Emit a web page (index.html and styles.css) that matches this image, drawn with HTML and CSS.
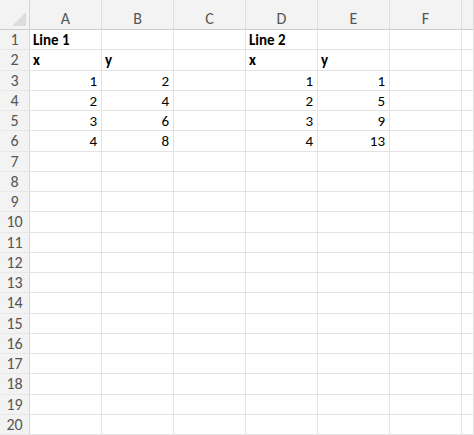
FILE: index.html
```html
<!DOCTYPE html>
<html lang="en">
<head>
  <meta charset="UTF-8" />
  <meta name="viewport" content="width=device-width, initial-scale=1" />
  <title>Sheet1</title>
  <link rel="stylesheet" href="styles.css">
</head>
<body>
  <div class="sheet" id="sheet"></div>

  <script>
    const cols = ["A", "B", "C", "D", "E", "F", ""];
    const data = {
      1: { A: ["Line 1", "bold"], D: ["Line 2", "bold"] },
      2: { A: ["x", "bold"], B: ["y", "bold"], D: ["x", "bold"], E: ["y", "bold"] },
      3: { A: [1], B: [2], D: [1], E: [1] },
      4: { A: [2], B: [4], D: [2], E: [5] },
      5: { A: [3], B: [6], D: [3], E: [9] },
      6: { A: [4], B: [8], D: [4], E: [13] }
    };

    function buildSheet() {
      let html = `<div class="corner"><span class="tri"></span></div>`;
      html += cols.map(c => `<div class="col-head">${c}</div>`).join("");

      for (let r = 1; r <= 20; r++) {
        html += `<div class="row-head">${r}</div>`;
        cols.forEach(c => {
          const cell = (data[r] || {})[c];
          if (!cell) {
            html += `<div class="cell"></div>`;
          } else if (typeof cell[0] === "number") {
            html += `<div class="cell num">${cell[0]}</div>`;
          } else {
            html += `<div class="cell ${cell[1] || ""}">${cell[0]}</div>`;
          }
        });
      }
      document.getElementById("sheet").innerHTML = html;
    }

    buildSheet();
  </script>
</body>
</html>
```

FILE: styles.css
```css
* {
  margin: 0;
  padding: 0;
  box-sizing: border-box;
}
body {
  width: 474px;
  height: 435px;
  background: #fff;
  font-family: Carlito, Calibri, 'Open Sans', sans-serif;
  font-size: 15px;
  color: #000;
  overflow: hidden;
}
.sheet {
  display: grid;
  grid-template-columns: 30px repeat(6, 72px) 1fr;
  grid-template-rows: 30px repeat(20, 20.25px);
}
.corner {
  position: relative;
  background: #f3f3f3;
  border-right: 1px solid #d6d6d6;
  border-bottom: 1px solid #cdcdcd;
}
.corner .tri {
  position: absolute;
  right: 3px;
  bottom: 3px;
  width: 0;
  height: 0;
  border-left: 14px solid transparent;
  border-bottom: 14px solid #dcdcdc;
}
.col-head {
  background: #f3f3f3;
  color: #555;
  font-size: 16px;
  text-align: center;
  padding-top: 9px;
  border-right: 1px solid #dedede;
  border-bottom: 1px solid #cdcdcd;
}
.row-head {
  background: #f3f3f3;
  color: #555;
  font-size: 16px;
  text-align: center;
  line-height: 20px;
  border-right: 1px solid #d6d6d6;
  border-bottom: 1px solid #e8e8e8;
}
.cell {
  line-height: 20px;
  padding: 0 3px;
  white-space: nowrap;
  border-right: 1px solid #e3e3e3;
  border-bottom: 1px solid #e3e3e3;
}
.cell.bold {
  font-weight: bold;
}
.cell.num {
  text-align: right;
  padding-right: 4px;
}
```
